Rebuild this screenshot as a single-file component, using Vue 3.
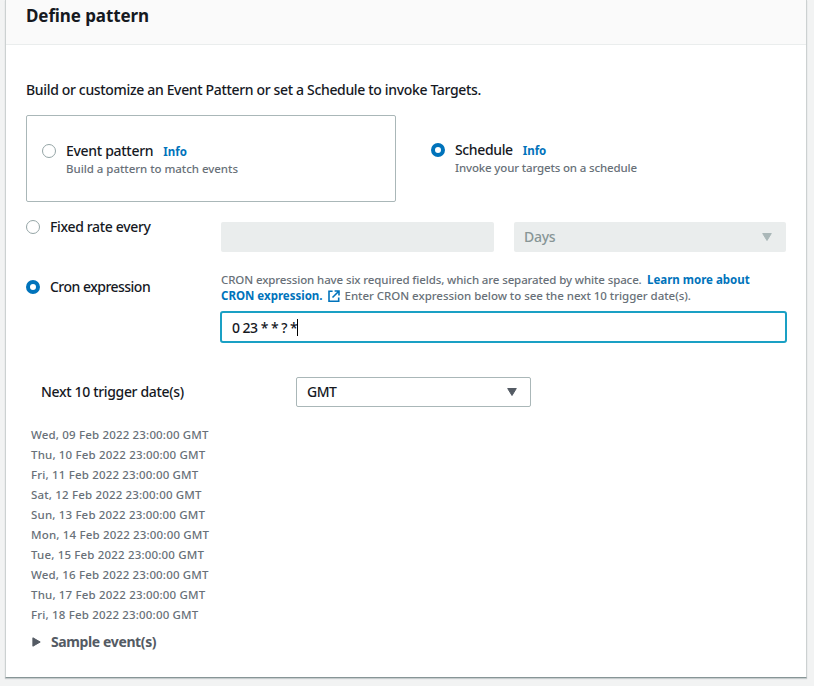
<script setup>
import { ref } from 'vue'

const mode = ref('schedule')
const kind = ref('cron')
const cron = ref('0 23 * * ? *')
const dates = [
  'Wed, 09 Feb 2022', 'Thu, 10 Feb 2022', 'Fri, 11 Feb 2022', 'Sat, 12 Feb 2022', 'Sun, 13 Feb 2022',
  'Mon, 14 Feb 2022', 'Tue, 15 Feb 2022', 'Wed, 16 Feb 2022', 'Thu, 17 Feb 2022', 'Fri, 18 Feb 2022',
]
</script>

<template>
  <main class="page">
    <section class="panel">
      <header class="head"><h2><span class="t-title">Define pattern</span></h2></header>
      <div class="body">
        <p class="intro"><span class="t-intro">Build or customize an Event Pattern or set a Schedule to invoke Targets.</span></p>

        <div class="tiles">
          <div class="tile outlined" @click="mode = 'event'">
            <i class="radio" :class="{ on: mode === 'event' }"></i>
            <div class="tile-text">
              <div class="tile-title"><span class="t-event">Event pattern</span><a class="info">Info</a></div>
              <div class="hint t-hint1">Build a pattern to match events</div>
            </div>
          </div>
          <div class="tile plain" @click="mode = 'schedule'">
            <i class="radio" :class="{ on: mode === 'schedule' }"></i>
            <div class="tile-text">
              <div class="tile-title"><span class="t-sched">Schedule</span><a class="info">Info</a></div>
              <div class="hint t-hint2">Invoke your targets on a schedule</div>
            </div>
          </div>
        </div>

        <div class="row rate">
          <div class="label" @click="kind = 'rate'">
            <i class="radio" :class="{ on: kind === 'rate' }"></i><span class="t-fixed">Fixed rate every</span>
          </div>
          <div class="disabled amount"></div>
          <div class="disabled unit">
            <span class="t-days">Days</span>
            <svg width="10" height="8" viewBox="0 0 10 8"><path d="M.7.5h8.6L5 7.5z" fill="#aab7b8" stroke="#aab7b8" stroke-linejoin="round" /></svg>
          </div>
        </div>

        <div class="row cron">
          <div class="label" @click="kind = 'cron'">
            <i class="radio" :class="{ on: kind === 'cron' }"></i><span class="t-cron">Cron expression</span>
          </div>
          <div class="cron-main">
            <div class="hint line"><span class="t-desc1">CRON expression have six required fields, which are separated by white space.</span><a class="t-learn">Learn more about</a></div>
            <div class="hint line"><a class="t-cronlink">CRON expression.</a>
              <svg class="ext" width="12" height="12" viewBox="0 0 12 12" fill="none" stroke="#0073bb" stroke-width="1.6"><path d="M4.6 1.3H1v9.9h9.7V7.4M6.6 1h4.4v4.4M10.8 1.2 4.5 7.5" /></svg>
              <span class="t-desc2">Enter CRON expression below to see the next 10 trigger date(s).</span></div>
            <div class="input"><span class="t-input">{{ cron }}</span><i class="caret"></i></div>
          </div>
        </div>

        <div class="next">
          <span class="next-label"><span class="t-next">Next 10 trigger date(s)</span></span>
          <div class="select">
            <span class="t-gmt">GMT</span>
            <svg width="10" height="8" viewBox="0 0 10 8"><path d="M.7.5h8.6L5 7.5z" fill="#545b64" stroke="#545b64" stroke-linejoin="round" /></svg>
          </div>
        </div>

        <ul class="dates">
          <li v-for="d in dates" :key="d"><span>{{ d }} 23:00:00 GMT</span></li>
        </ul>

        <div class="sample">
          <svg width="9" height="10" viewBox="0 0 9 10"><path d="M.9.8v8.4L8.2 5z" fill="#545b64" stroke="#545b64" stroke-linejoin="round" /></svg>
          <span class="t-sample">Sample event(s)</span>
        </div>
      </div>
    </section>
  </main>
</template>

<style>
body { margin: 0; background: #f2f3f3; }
</style>

<style scoped>
* { box-sizing: border-box; }
.page { height: 686px; padding: 0 7px 0 5px; overflow: hidden; background: #f2f3f3; font-family: "Noto Sans", sans-serif; font-size: 14px; font-weight: 500; line-height: 20px; color: #16191f; }
.page span, .page a, .hint { white-space: nowrap; }
.panel { height: 678px; background: #fff; border: 1px solid #ccd1d1; border-top: 0; border-bottom-color: #879596; box-shadow: 0 1px 1px rgba(0, 28, 36, .18); }
.head { height: 45px; padding: 4px 20px 0; background: #fafafa; border-bottom: 1px solid #eaeded; }
h2 { margin: 0; font-size: 17px; line-height: 24px; font-weight: 700; }
.body { padding: 35px 20px 0; }
.intro { margin: 0; height: 35px; }
.tiles { display: flex; height: 87px; }
.tile { display: flex; gap: 10px; }
.outlined { width: 370px; border: 1px solid #aab7b8; border-radius: 2px; padding: 25px 15px 0; }
.plain { padding: 25px 0 0 35px; }
.radio { flex: none; width: 14px; height: 14px; border: 1px solid #95a5a6; border-radius: 50%; background: #fff; margin-top: 3px; }
.radio.on { border: 4px solid #0073bb; }
.tile-title { display: flex; align-items: baseline; gap: 10px; height: 20px; }
.hint { font-size: 11.5px; line-height: 16px; color: #687078; }
.info, .hint a { font-weight: 700; color: #0073bb; font-size: 11.5px; }
.row { display: flex; }
.label { display: flex; flex: none; gap: 10px; width: 195px; }
.rate { height: 60px; padding-top: 15px; }
.disabled { height: 30px; margin-top: 5px; background: #eaeded; border-radius: 2px; color: #879596; }
.amount { width: 273px; margin-right: 20px; }
.unit { width: 272px; padding: 0 14px 0 10px; display: flex; justify-content: space-between; align-items: center; }
.cron { height: 100px; padding-top: 10px; }
.cron .label { padding-top: 5px; }
.cron-main { flex: none; width: 566px; }
.line { display: flex; height: 16px; align-items: center; }
.t-desc1 { width: 426px; letter-spacing: -.12px; }
.ext { margin: 0 5px 0 5px; }
.input { display: flex; align-items: center; width: 567px; height: 32px; margin: 7px 0 0 -1px; padding: 1px 0 0 10px; border: 2px solid #1aa0c4; border-radius: 3px; }
.caret { width: 1px; height: 17px; background: #000; }
.next { display: flex; height: 30px; margin-top: 15px; align-items: center; }
.next-label { width: 270px; padding-left: 15px; }
.select { width: 235px; height: 30px; display: flex; justify-content: space-between; align-items: center; padding: 0 13px 0 10px; border: 1px solid #aab7b8; border-radius: 2px; }
.dates { list-style: none; margin: 18px 0 0; padding: 0 0 0 5px; color: #687078; font-size: 11.5px; letter-spacing: .17px; }
.dates li { height: 20px; }
.sample { display: flex; align-items: center; gap: 10px; height: 20px; margin-top: 7px; padding-left: 6px; color: #545b64; font-weight: 700; }
.t-title { letter-spacing: -.1px; }
.t-intro { letter-spacing: -.34px; }
.t-event { letter-spacing: -.3px; }
.t-sched { letter-spacing: -.37px; }
.t-fixed { letter-spacing: -.34px; }
.t-cron { letter-spacing: -.52px; }
.t-next { letter-spacing: -.34px; }
.t-days { letter-spacing: -.3px; }
.t-gmt { letter-spacing: -.5px; }
.t-sample { letter-spacing: -.38px; }
.t-input { letter-spacing: -.52px; }
.t-hint1 { letter-spacing: -.04px; }
.t-hint2 { letter-spacing: -.15px; }
.t-desc2 { letter-spacing: -.04px; }
</style>
